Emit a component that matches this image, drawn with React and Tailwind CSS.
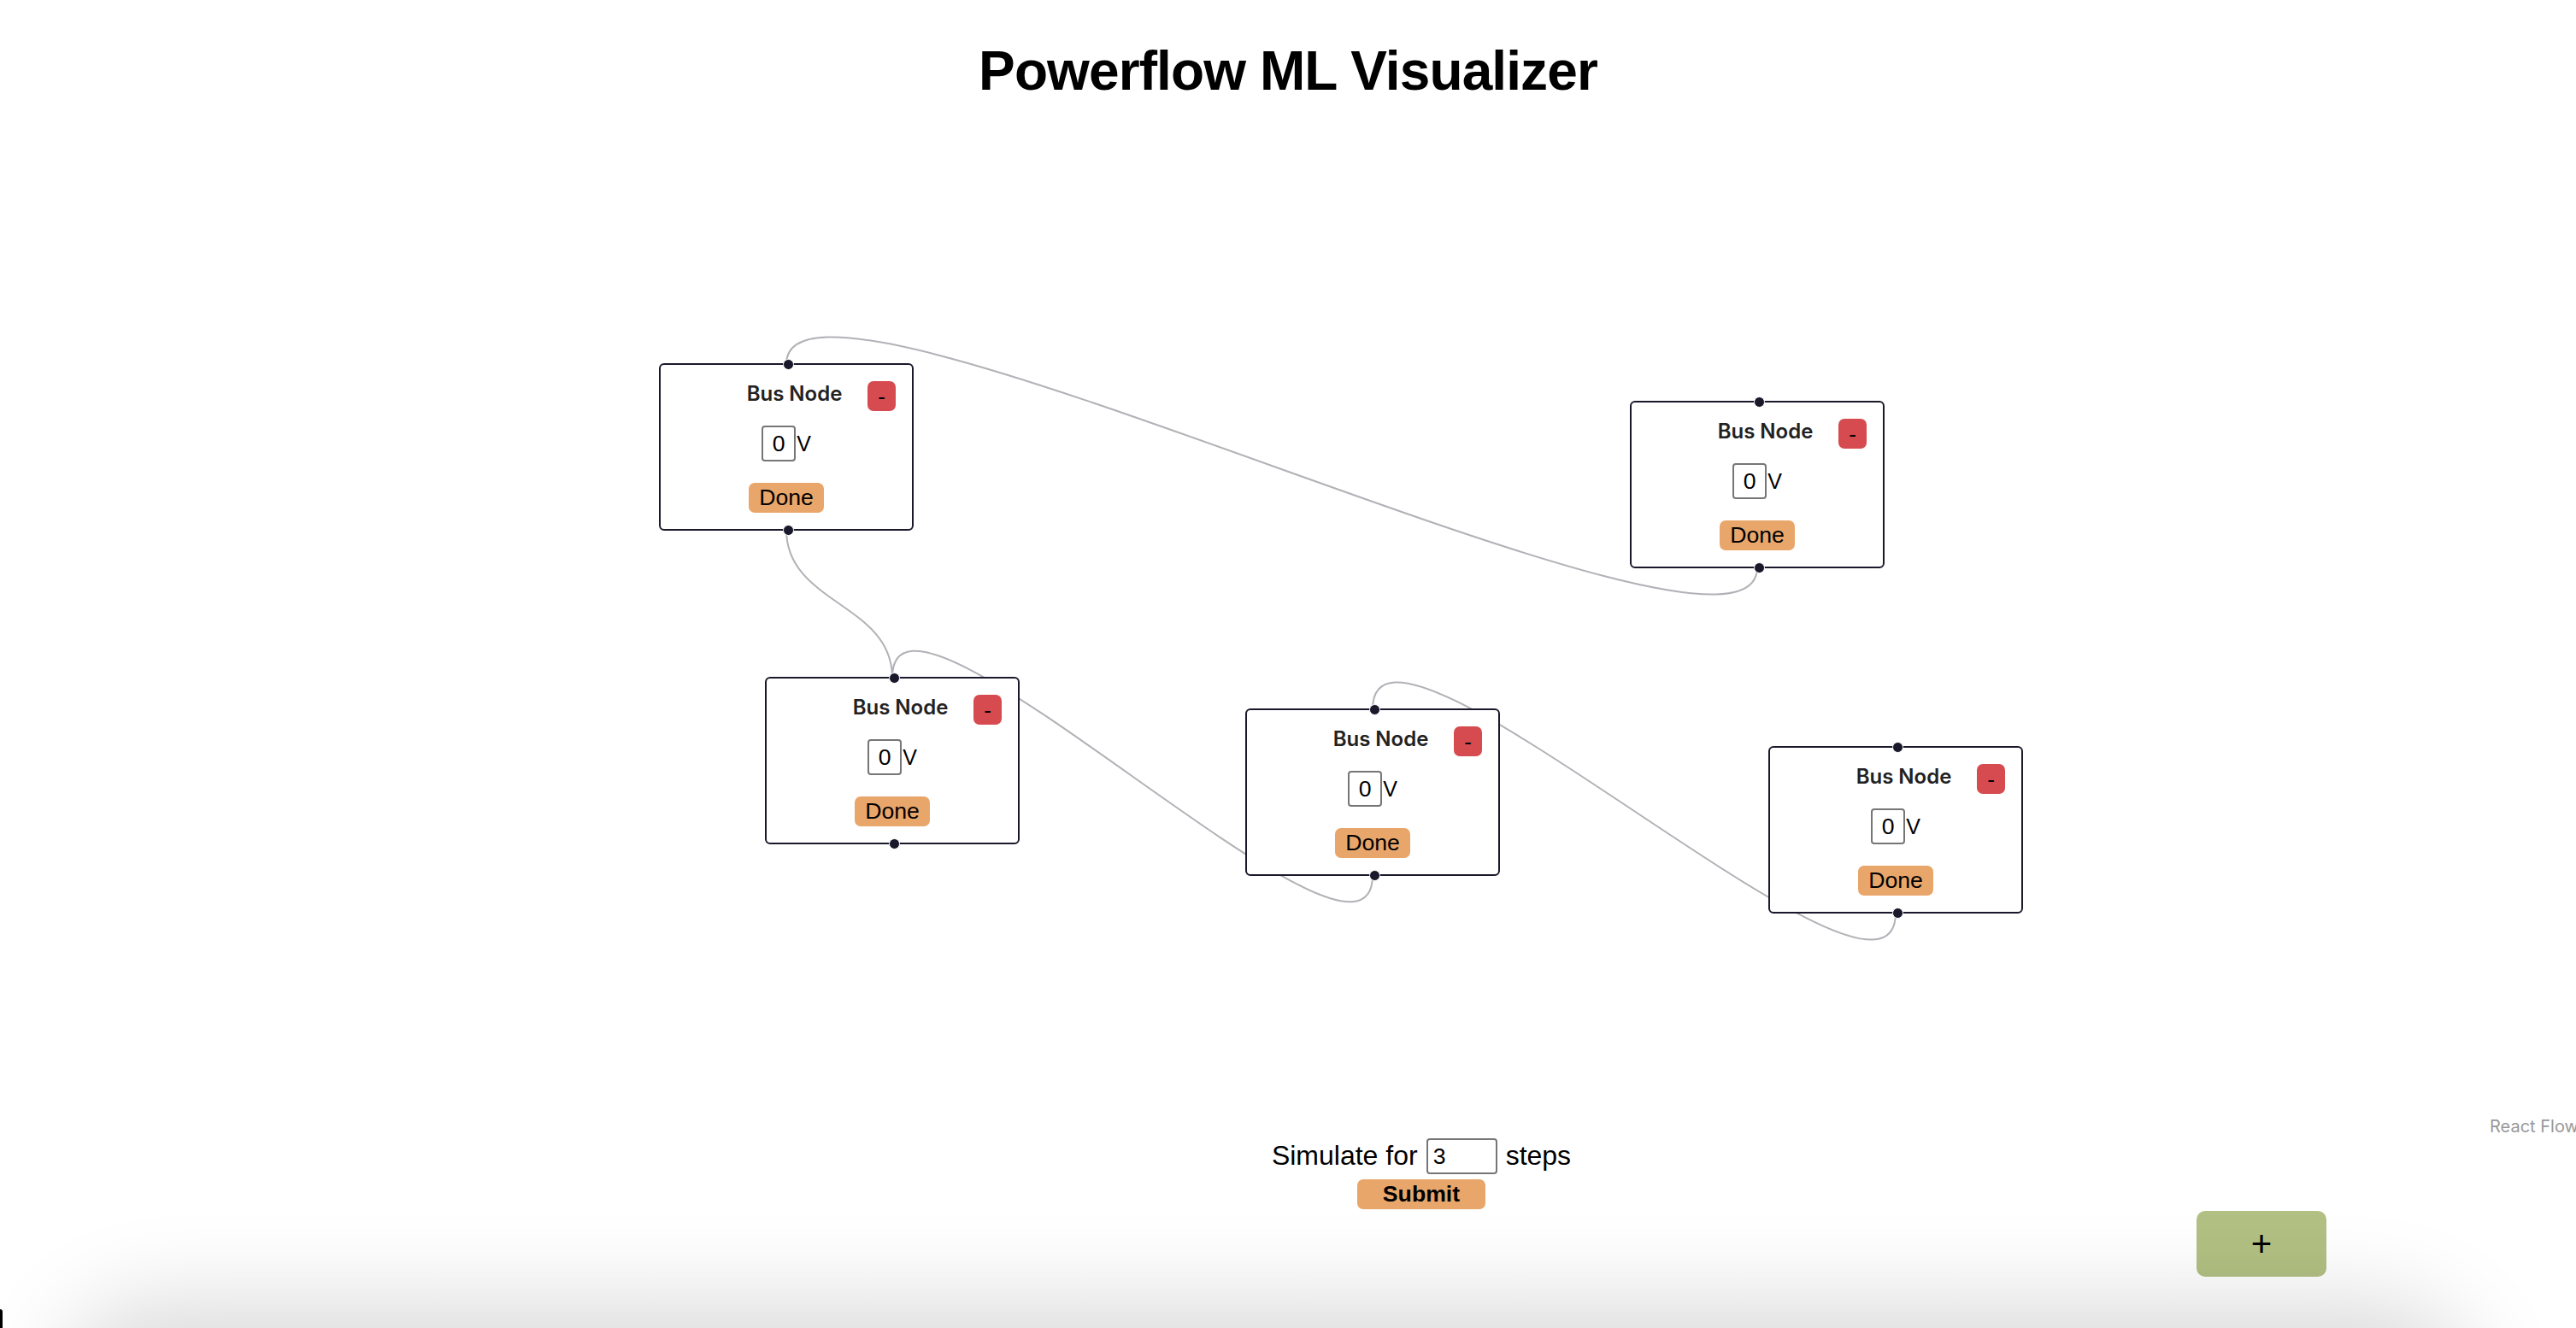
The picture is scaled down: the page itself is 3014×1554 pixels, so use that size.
import React from "react";

const NODES = [
  { id: 1, x: 771, y: 425 },
  { id: 2, x: 1907, y: 469 },
  { id: 3, x: 895, y: 792 },
  { id: 4, x: 1457, y: 829 },
  { id: 5, x: 2069, y: 873 },
];

const H = 196;

const top = (n) => [n.x + 149, n.y + 1];
const bottom = (n) => [n.x + 149, n.y + H - 1];

const EDGES = [
  [2, 1],
  [1, 3],
  [4, 3],
  [5, 4],
];

function bez([sx, sy], [tx, ty], k = 11) {
  const d = ty - sy;
  const o = d >= 0 ? 0.5 * d : k * Math.sqrt(-d);
  return `M${sx},${sy} C${sx},${sy + o} ${tx},${ty - o} ${tx},${ty}`;
}

function BusNode({ x, y }) {
  return (
    <div
      className="absolute w-[298px] h-[196px] rounded-[6px] border-2 border-[#1a192b] bg-white"
      style={{ left: x, top: y }}
    >
      <div className="relative flex h-[35px] mt-[19px] items-center justify-center">
        <div className="ml-[19px] mb-[6px] font-['Inter',sans-serif] text-[24px] font-semibold leading-none text-[#222]">
          Bus Node
        </div>
        <button className="absolute right-[19px] top-0 flex h-[35px] w-[33px] items-center justify-center rounded-[7px] bg-[#d64b4f] text-[26px] leading-none text-black">
          -
        </button>
      </div>
      <div className="mt-[17px] flex items-center justify-center">
        <div className="flex h-[42px] w-[40px] items-center justify-center rounded-[4px] border-2 border-[#767676] text-[26.67px] leading-none text-black">
          0
        </div>
        <span className="ml-[1px] text-[25px] leading-none text-black">V</span>
      </div>
      <div className="mt-[25px] flex justify-center">
        <button className="flex h-[35px] w-[88px] items-center justify-center rounded-[7px] bg-[#e9a66b] text-[26.67px] leading-none text-black">
          Done
        </button>
      </div>
      <div className="absolute left-[142.5px] top-[-7.5px] h-[13px] w-[13px] rounded-full border border-white bg-[#1a192b]" />
      <div className="absolute left-[142.5px] bottom-[-7.5px] h-[13px] w-[13px] rounded-full border border-white bg-[#1a192b]" />
    </div>
  );
}

export default function App() {
  const byId = Object.fromEntries(NODES.map((n) => [n.id, n]));
  return (
    <div className="relative h-[1554px] w-[3014px] overflow-hidden bg-white font-['Liberation_Sans',Arial,sans-serif] text-black">
      {/* flow canvas */}
      <div className="absolute inset-0">
        <svg className="absolute inset-0" width="3014" height="1554">
          {EDGES.map(([s, t], i) => (
            <path
              key={i}
              d={bez(bottom(byId[s]), top(byId[t]))}
              fill="none"
              stroke="#b1b1b7"
              strokeWidth="2"
            />
          ))}
        </svg>
        {NODES.map((n) => (
          <BusNode key={n.id} x={n.x} y={n.y} />
        ))}
        <div className="absolute left-[2913px] top-[1305px] whitespace-nowrap font-['Inter',sans-serif] text-[20px] leading-[26px] text-[#999]">
          React Flow
        </div>
        <button className="absolute left-[2570px] top-[1417px] flex h-[77px] w-[152px] items-center justify-center rounded-[10px] bg-[#b2c083] text-[42px] leading-none text-black">
          +
        </button>
      </div>

      {/* bottom shadow */}
      <div className="pointer-events-none absolute left-[100px] right-[150px] top-[1554px] h-[200px] rounded-[80px] shadow-[0_0_110px_30px_rgba(0,0,0,0.15)]" />
      <div className="absolute bottom-0 left-0 h-[22px] w-[3px] rounded-tr-[3px] bg-black" />

      {/* foreground content */}
      <div className="pointer-events-none relative flex h-full flex-col">
        <h1 className="pt-[51px] text-center text-[64px] font-bold leading-none tracking-[-0.9px]">
          Powerflow ML Visualizer
        </h1>
        <div className="pointer-events-auto mt-auto flex flex-col items-center pb-[139px] pl-[312px]">
          <div className="flex h-[42px] items-center gap-[10px] text-[32px] leading-none">
            <span className="mb-[3px]">Simulate for</span>
            <div className="flex h-[42px] w-[83px] items-center rounded-[4px] border-2 border-[#767676] pl-[6px] text-[26.67px] leading-none">
              3
            </div>
            <span className="mb-[3px]">steps</span>
          </div>
          <button className="mt-[6px] flex h-[35px] w-[150px] items-center justify-center rounded-[7px] bg-[#e9a66b] text-[26.67px] font-bold leading-none text-black">
            Submit
          </button>
        </div>
      </div>
    </div>
  );
}
